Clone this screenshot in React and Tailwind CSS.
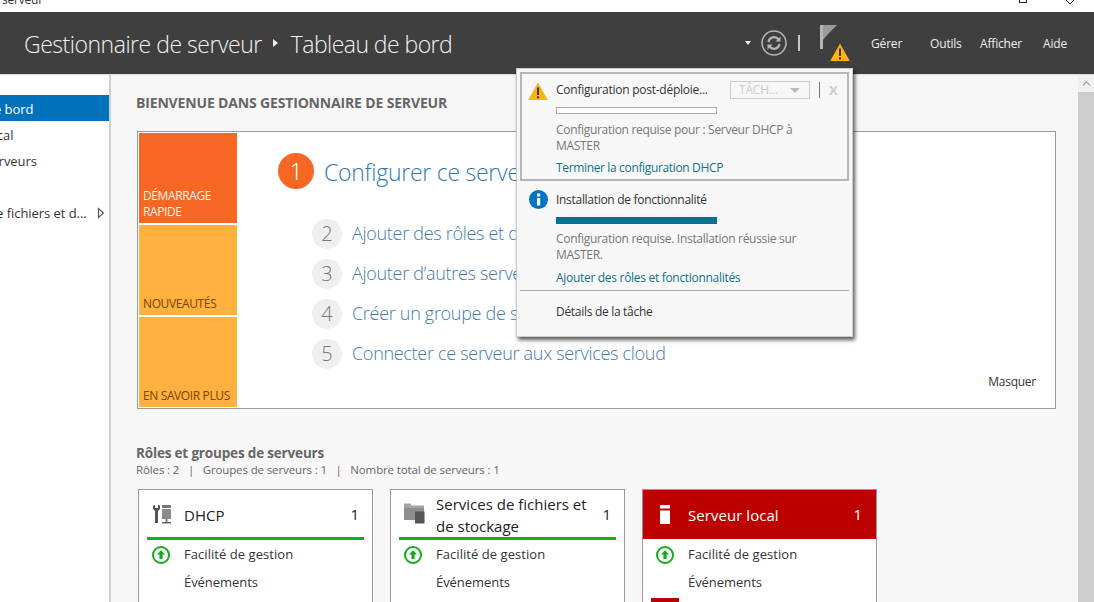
import { ChevronUp } from "lucide-react"

const font = { fontFamily: '"Open Sans", "Noto Sans", sans-serif' }

function UpArrow() {
  return (
    <svg width="18" height="18" viewBox="0 0 18 18" className="shrink-0">
      <circle cx="9" cy="9" r="8" fill="#fff" stroke="#13ab1b" strokeWidth="2" />
      <path d="M9 4.2 13 8.6H10.6V13H7.4V8.6H5Z" fill="#13ab1b" />
    </svg>
  )
}

function Warning({ size = 22 }) {
  return (
    <svg width={size} height={size * 0.9} viewBox="0 0 20 18">
      <path d="M10 0.5 19.8 18H0.2Z" fill="#fcb316" />
      <rect x="9" y="5.5" width="2" height="7.5" fill="#3b3b3b" />
      <rect x="9" y="14.3" width="2" height="2" fill="#3b3b3b" />
    </svg>
  )
}

function ToolsIcon() {
  return (
    <svg width="20" height="20" viewBox="0 0 20 20">
      <path d="M1 1.5V5L3 7V19H6V7L8 5V1.5L6 1V4H3V1Z" fill="#555" />
      <rect x="10" y="1" width="9" height="3" fill="#777" />
      <rect x="10" y="5" width="9" height="10" fill="#8b8b8b" />
      <rect x="13.5" y="15" width="2" height="3" fill="#777" />
      <rect x="10" y="18" width="9" height="1.5" fill="#666" />
    </svg>
  )
}

function FilesIcon() {
  return (
    <svg width="21" height="21" viewBox="0 0 21 21">
      <path d="M0 0.5H7V2.5H20V6H0Z" fill="#a5a5a5" />
      <rect x="0" y="5" width="20" height="12" fill="#8e8e8e" />
      <rect x="11" y="8.5" width="9.5" height="12" fill="#555" />
    </svg>
  )
}

function ServerIcon() {
  return (
    <svg width="10" height="19" viewBox="0 0 10 19">
      <rect width="10" height="3.5" fill="#fff" />
      <rect y="5.5" width="10" height="13.5" fill="#fff" />
    </svg>
  )
}

function SidebarRow({ text, shift, active, arrow }) {
  return (
    <div className={"h-[26px] w-[109px] flex items-center overflow-hidden text-[13px] relative " + (active ? "bg-[#0072bc] text-white" : "text-[#333]")}>
      <span className={"whitespace-nowrap tracking-[-0.05px] pt-[4px] " + shift}>{text}</span>
      {arrow && (
        <svg className="absolute left-[97px] top-[8px]" width="8" height="12" viewBox="0 0 8 12">
          <path d="M1.5 1.5V10.5L6.5 6Z" fill="none" stroke="#555" strokeWidth="1.2" />
        </svg>
      )}
    </div>
  )
}

function Tile({ lines, className }) {
  return (
    <div className={"w-[98px] h-[90px] flex flex-col justify-end pl-[4px] pb-[3px] text-[12px] leading-[16px] tracking-[-0.38px] " + className}>
      {lines.map((l) => <span key={l} className="whitespace-nowrap">{l}</span>)}
    </div>
  )
}

function Step({ n, text }) {
  return (
    <div className="h-[30px] flex items-center gap-[10px] mb-[10px]">
      <div className="w-[30px] h-[30px] rounded-full bg-[#efefef] text-[#777] flex items-center justify-center text-[20px] font-light">{n}</div>
      <span className="text-[#3f7bab] text-[18px] font-light tracking-[-0.3px] whitespace-nowrap">{text}</span>
    </div>
  )
}

function Card({ icon, title, red, alert }) {
  return (
    <div className="w-[235px] h-[120px] border border-[#999] border-b-0 bg-white relative text-[13px] text-[#333]">
      <div className={red ? "h-[49px] bg-[#bd0000] text-white flex items-center pl-[18px] pr-[14px]" : "h-[50px] mx-[8px] border-b-[3px] border-[#16ae1a] flex items-center text-[#222]"}>
        <div className={red ? "w-[28px] flex justify-start ml-[-1px]" : "w-[37px] flex justify-start pl-[5px]"}>{icon}</div>
        <div className={"flex-1 text-[15px] leading-[22px] " + (red ? "tracking-[0.05px]" : "tracking-[0px] pt-[2px]")}>{title}</div>
        <div className={"text-[15px] " + (red ? "" : "pr-[5px] pt-[2px]")}>1</div>
      </div>
      <div className={"flex items-center h-[28px] pl-[13px] gap-[14px] " + (red ? "mt-[2px]" : "mt-[1px]")}>
        <UpArrow />
        <span className="tracking-[0.05px]">Facilité de gestion</span>
      </div>
      <div className="h-[28px] flex items-center pl-[45px] tracking-[-0.05px]">Événements</div>
      {alert && <div className="absolute left-[8px] top-[108px] w-[28px] h-[12px] bg-[#bd0000]" />}
    </div>
  )
}

function Popup() {
  return (
    <div className="absolute left-[516px] top-[68px] w-[337px] h-[269px] bg-[#f7f7f7] border border-[#ccc] shadow-[2px_3px_4px_rgba(0,0,0,0.65)] text-[12px] z-10">
      <div className="mx-[3px] mt-[3px] h-[109px] border-2 border-[#b5b5b5] relative pl-[34px] pt-[6px]">
        <div className="absolute left-[6px] top-[8px]"><Warning size={20} /></div>
        <div className="text-[#333] leading-[20px] tracking-[-0.25px] whitespace-nowrap">Configuration post-déploie...</div>
        <div className="w-[161px] h-[7px] mt-[7px] bg-white border border-[#aaa]" />
        <div className="mt-[8px] w-[270px] leading-[16px] text-[#777] tracking-[-0.3px]">Configuration requise pour : Serveur DHCP à<br />MASTER</div>
        <div className="mt-[6px] leading-[16px] text-[#12708c] tracking-[-0.35px]">Terminer la configuration DHCP</div>
        <div className="absolute left-[208px] top-[7px] w-[80px] h-[18px] border border-[#ccc] flex items-center pl-[8px] text-[#ccc] tracking-[-0.2px]">
          TÂCH...
          <span className="absolute right-[9px] top-[6px] w-0 h-0 border-x-[5px] border-x-transparent border-t-[5px] border-t-[#bbb]" />
        </div>
        <div className="absolute left-[297px] top-[8px] w-px h-[16px] bg-[#777]" />
        <div className="absolute left-[307px] top-[7px] text-[13px] font-bold text-[#ccc] leading-[18px]">X</div>
      </div>
      <div className="relative pl-[39px] pt-[10px]">
        <svg className="absolute left-[12px] top-[9px]" width="19" height="19" viewBox="0 0 19 19">
          <circle cx="9.5" cy="9.5" r="9.5" fill="#0072c6" />
          <rect x="8" y="8" width="3.2" height="7.5" fill="#fff" />
          <rect x="8" y="3.5" width="3.2" height="3" fill="#fff" />
        </svg>
        <div className="text-[#333] leading-[18px] tracking-[-0.3px]">Installation de fonctionnalité</div>
        <div className="w-[161px] h-[7px] mt-[8px] bg-[#06718f]" />
        <div className="mt-[7px] w-[280px] leading-[16px] text-[#777] tracking-[-0.3px]">Configuration requise. Installation réussie sur<br />MASTER.</div>
        <div className="mt-[7px] leading-[16px] text-[#12708c] tracking-[-0.3px]">Ajouter des rôles et fonctionnalités</div>
      </div>
      <div className="mx-[3px] mt-[4px] h-px bg-[#aaa]" />
      <div className="pl-[39px] mt-[13px] leading-[16px] text-[#333] tracking-[-0.3px]">Détails de la tâche</div>
    </div>
  )
}

export default function App() {
  return (
    <div style={font} className="relative w-[1094px] h-[602px] overflow-hidden bg-[#f7f7f7]">
      {/* title bar, cut off by the top of the shot */}
      <div className="h-[12px] bg-white relative overflow-hidden">
        <span className="absolute left-[2px] top-[-8px] text-[12px] leading-[16px] text-[#333] tracking-[-0.2px]">serveur</span>
        <div className="absolute left-[1019px] top-[-6px] w-[8px] h-[9px] border border-[#222]" />
        <svg className="absolute left-[1064px] top-0" width="12" height="5" viewBox="0 0 12 5">
          <path d="M1 -1 6 4M11 -1 6 4" stroke="#222" fill="none" />
        </svg>
      </div>

      <header className="h-[62px] bg-[#3f3f3f] flex items-center text-[#f2f2f2] pl-[24px] relative">
        <span className="text-[23px] font-light tracking-[-0.48px] whitespace-nowrap pt-[2px]">Gestionnaire de serveur</span>
        <span className="ml-[11px] mr-[13px] w-0 h-0 border-y-[4px] border-y-transparent border-l-[5px] border-l-[#eee]" />
        <span className="text-[23px] font-light tracking-[-0.55px] whitespace-nowrap pt-[2px]">Tableau de bord</span>
        <div className="ml-auto flex items-center">
          <span className="w-0 h-0 border-x-[3.5px] border-x-transparent border-t-[4px] border-t-[#eee] mr-[10px]" />
          <svg width="26" height="26" viewBox="0 0 26 26" className="mr-[11px]">
            <circle cx="13" cy="13" r="12" fill="none" stroke="#b5b5b5" strokeWidth="1.6" />
            <path d="M7.5 12A5.6 5.6 0 0 1 17.5 9.5M18.5 14A5.6 5.6 0 0 1 8.5 16.5" fill="none" stroke="#b5b5b5" strokeWidth="2.2" />
            <path d="M19.5 6.5V11.5H14.5ZM6.5 19.5V14.5H11.5Z" fill="#b5b5b5" />
          </svg>
          <div className="w-[2px] h-[16px] bg-[#c8c8c8] mr-[20px]" />
          <div className="relative w-[30px] h-[40px] mr-[20px] top-[2px]">
            <svg width="18" height="26" viewBox="0 0 18 26" className="absolute left-0 top-0">
              <rect x="0" y="0" width="3" height="24" fill="#b5b5b5" />
              <path d="M3 0H17L9 8 3 15Z" fill="#9b9b9b" />
            </svg>
            <div className="absolute left-[10px] top-[18px]"><Warning size={20} /></div>
          </div>
          <div className="flex items-center text-[12px] text-[#eee] tracking-[-0.2px] pr-[27px] pt-[2px]">
            <span className="w-[60px] pl-[1px]">Gérer</span>
            <span className="w-[50px]">Outils</span>
            <span className="w-[63px]">Afficher</span>
            <span>Aide</span>
          </div>
        </div>
      </header>

      <div className="flex h-[528px]">
        <aside className="w-[111px] shrink-0 bg-white border-r-2 border-[#d0d0d0] pt-[20px] border-t border-t-[#ddd]">
          <SidebarRow text="Tableau de bord" shift="ml-[-65px]" active />
          <SidebarRow text="Serveur local" shift="ml-[-64px]" />
          <SidebarRow text="Tous les serveurs" shift="ml-[-67px]" />
          <div className="h-[26px]" />
          <SidebarRow text="Services de fichiers et d..." shift="ml-[-64px]" arrow />
        </aside>

        <main className="flex-1 pl-[25px] pt-[19px] border-t border-t-[#ddd]">
          <h1 className="text-[14px] font-bold text-[#666] leading-[18px] tracking-[-0.16px] whitespace-nowrap">BIENVENUE DANS GESTIONNAIRE DE SERVEUR</h1>

          <section className="ml-[1px] mt-[19px] w-[919px] h-[278px] border border-[#999] bg-white flex p-[1px] relative">
            <div className="flex flex-col gap-[2px]">
              <Tile lines={["DÉMARRAGE", "RAPIDE"]} className="bg-[#f56723] text-[#fff2e6]" />
              <Tile lines={["NOUVEAUTÉS"]} className="bg-[#feb13f] text-[#7a4300]" />
              <Tile lines={["EN SAVOIR PLUS"]} className="bg-[#feb13f] text-[#7a4300]" />
            </div>
            <div className="pl-[41px]">
              <div className="flex items-center gap-[10px] mt-[20px]">
                <div className="w-[36px] h-[36px] rounded-full bg-[#f56723] text-white flex items-center justify-center text-[24px] font-light">1</div>
                <span className="text-[#2f77ab] text-[23px] font-light tracking-[-0.25px] whitespace-nowrap pt-[2px]">Configurer ce serveur local</span>
              </div>
              <div className="pl-[34px] mt-[29px]">
                <Step n="2" text="Ajouter des rôles et des fonctionnalités" />
                <Step n="3" text="Ajouter d’autres serveurs à gérer" />
                <Step n="4" text="Créer un groupe de serveurs" />
                <Step n="5" text="Connecter ce serveur aux services cloud" />
              </div>
            </div>
            <span className="absolute right-[19px] top-[241px] text-[12px] text-[#333] tracking-[-0.25px]">Masquer</span>
          </section>

          <h2 className="mt-[35px] text-[13.5px] font-bold text-[#666] leading-[18px] tracking-[-0.17px]">Rôles et groupes de serveurs</h2>
          <div className="text-[11.5px] leading-[16px] text-[#666] tracking-[-0.125px] whitespace-pre">Rôles : 2   |   Groupes de serveurs : 1   |   Nombre total de serveurs : 1</div>

          <div className="flex gap-[17px] ml-[2px] mt-[11px]">
            <Card icon={<ToolsIcon />} title="DHCP" />
            <Card icon={<FilesIcon />} title={<>Services de fichiers et<br />de stockage</>} />
            <Card icon={<ServerIcon />} title="Serveur local" red alert />
          </div>
        </main>

        <div className="w-[16px] shrink-0 bg-[#cdcdcd] border-t border-t-[#ddd] relative">
          <div className="h-[17px] bg-[#f0f0f0] flex items-center justify-center">
            <ChevronUp size={13} color="#999" />
          </div>
        </div>
      </div>

      <Popup />
    </div>
  )
}
